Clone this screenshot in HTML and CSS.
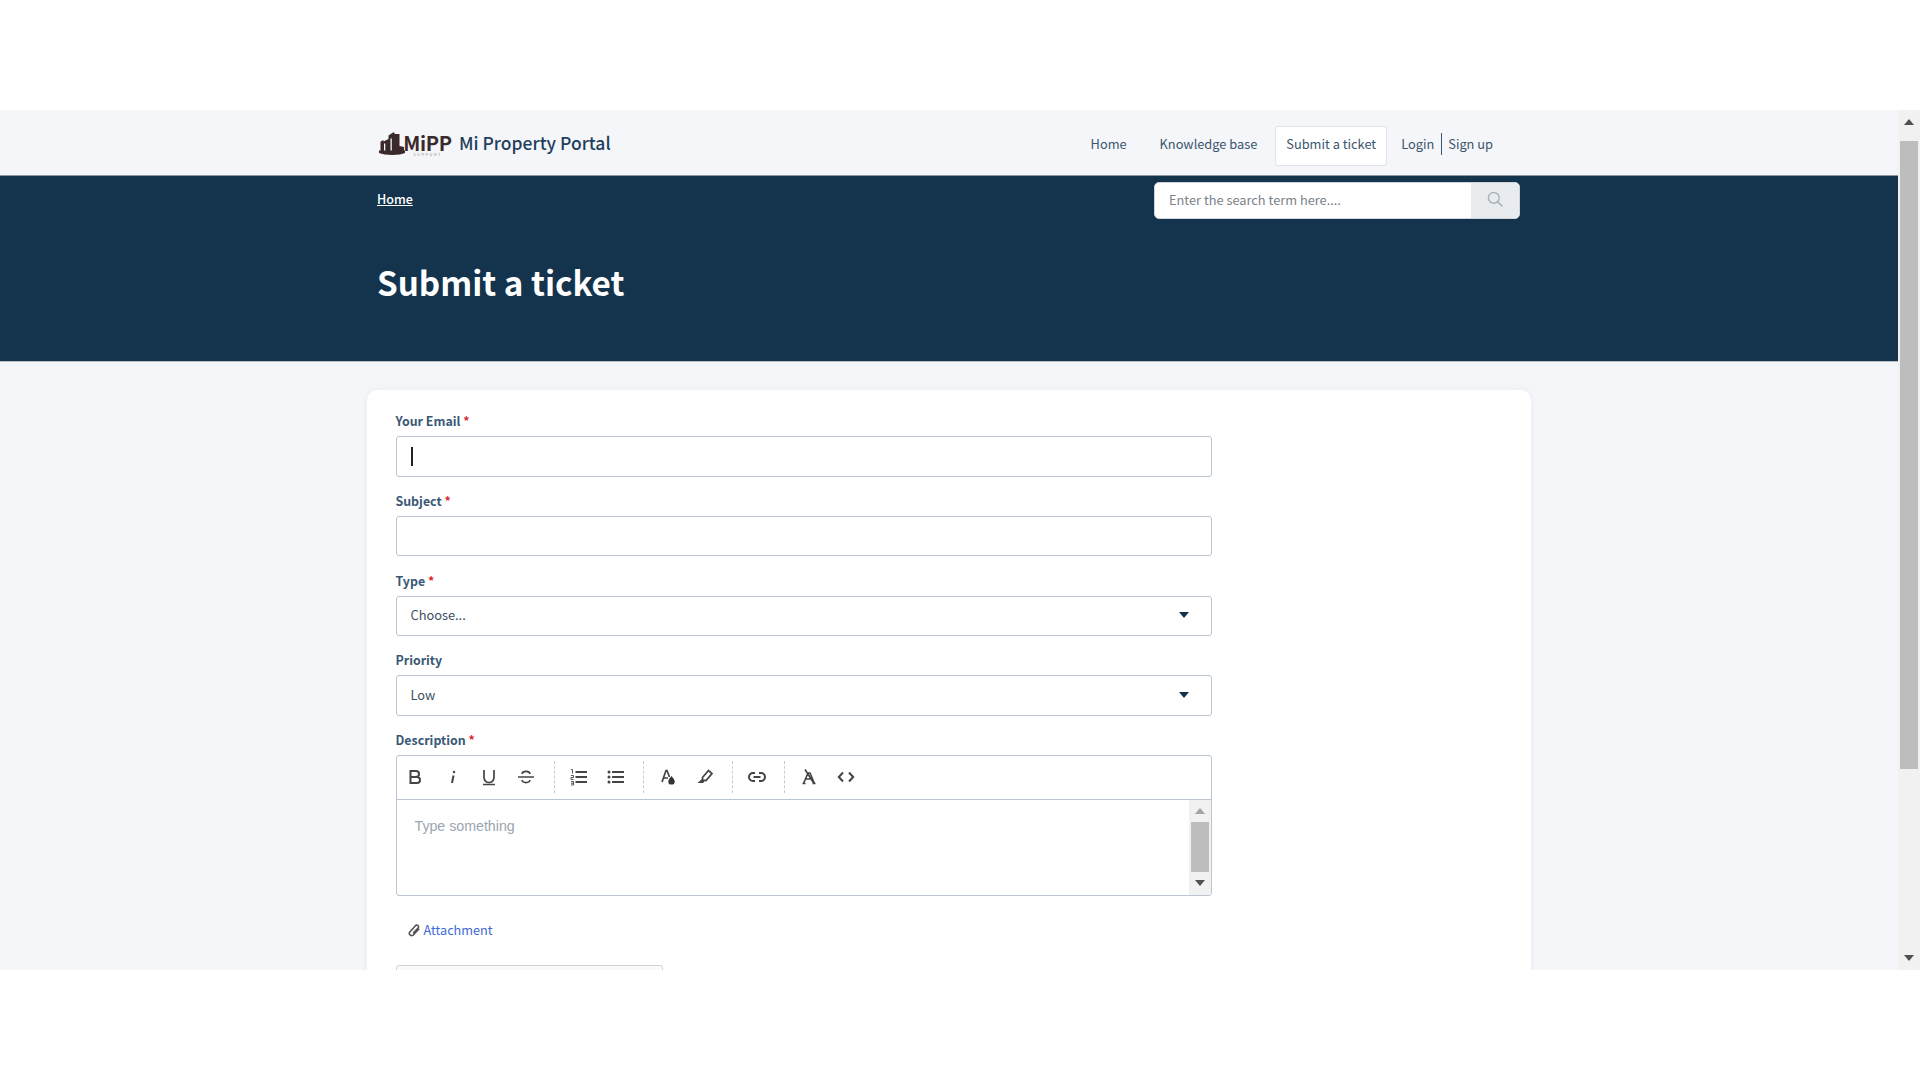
FILE: index.html
```html
<!DOCTYPE html>
<html lang="en">
<head>
<meta charset="utf-8">
<title>Submit a ticket</title>
<link rel="stylesheet" href="styles.css">
</head>
<body>
<div class="app">
  <div class="page">
    <header class="topbar">
      <div class="container topbar-inner">
        <a class="brand">
          <span class="logo">
            <svg class="logo-mark" viewBox="0 0 26 24" width="26" height="24">
              <path fill="#3b2a2b" d="M0 18.500h26v2.500c-5 2.600-20 2.600-26 0z"/>
              <path fill="#3b2a2b" d="M1.500 9.500l3-1.500v1.500l5-2.500V3.500L14 .5h1.500V2h5v17H1.500zM20.500 14l4.500 1v4h-4.500z"/>
              <path fill="#f5f7fa" d="M5 11.500h1.300v7H5zM11.500 6.500h1.300v12h-1.300z"/>
            </svg>
            <span class="logo-text">
              <span class="logo-name">MiPP</span>
              <span class="logo-sub">SUPPORT</span>
            </span>
          </span>
          <span class="brand-name">Mi Property Portal</span>
        </a>
        <nav class="nav">
          <a class="nav-link">Home</a>
          <a class="nav-link nav-link-tight">Knowledge base</a>
          <a class="nav-link nav-active">Submit a ticket</a>
          <span class="auth"><a class="auth-link">Login</a><a class="auth-link auth-last">Sign up</a></span>
        </nav>
      </div>
    </header>
    <section class="hero">
      <div class="container">
        <div class="hero-top">
          <a class="crumb">Home</a>
          <div class="search">
            <span class="search-input">Enter the search term here....</span>
            <span class="search-btn">
              <svg viewBox="0 0 16 16" width="16" height="16"><circle cx="6.800" cy="6.800" r="5.400" fill="none" stroke="#a9b4bd" stroke-width="1.500"/><path d="M10.800 10.800l4.200 4.200" stroke="#a9b4bd" stroke-width="1.700" stroke-linecap="round"/></svg>
            </span>
          </div>
        </div>
        <h1 class="title">Submit a ticket</h1>
      </div>
    </section>
    <main class="container card-wrap">
      <div class="card">
        <form class="form">
          <div class="field">
            <label class="label">Your Email <em class="req">*</em></label>
            <div class="control"><span class="caret"></span></div>
          </div>
          <div class="field">
            <label class="label">Subject <em class="req">*</em></label>
            <div class="control"></div>
          </div>
          <div class="field">
            <label class="label">Type <em class="req">*</em></label>
            <div class="control select"><span>Choose...</span><i class="tri"></i></div>
          </div>
          <div class="field">
            <label class="label">Priority</label>
            <div class="control select"><span>Low</span><i class="tri"></i></div>
          </div>
          <div class="field">
            <label class="label">Description <em class="req">*</em></label>
            <div class="editor">
              <div class="toolbar">
                <div class="tgroup">
                  <span class="tbtn"><svg viewBox="0 0 18 18"><path fill="none" stroke="#444" stroke-width="2" d="M4.500 3h5.500a3 3 0 0 1 0 6H4.500zM4.500 9h6.500a3 3 0 0 1 0 6H4.500z"/></svg></span>
                  <span class="tbtn"><svg viewBox="0 0 18 18"><path fill="none" stroke="#444" stroke-width="2" d="M10.500 7.500L9 15"/><circle cx="11" cy="4" r="1.200" fill="#444"/></svg></span>
                  <span class="tbtn"><svg viewBox="0 0 18 18"><path fill="none" stroke="#444" stroke-width="1.700" d="M4 2v7.500a5 5 0 0 0 10 0V2M3 16.500h12"/></svg></span>
                  <span class="tbtn"><svg viewBox="0 0 18 18"><path fill="none" stroke="#444" stroke-width="1.600" d="M1 9h16M13 6c-.5-3.500-7.500-3.500-8 0M5 12c.5 3.500 7.500 3.500 8 0"/></svg></span>
                </div>
                <div class="tgroup">
                  <span class="tbtn"><svg viewBox="0 0 18 18"><path stroke="#444" stroke-width="1.900" d="M5.500 4H17M5.500 9H17M5.500 14H17"/><path fill="none" stroke="#444" stroke-width=".9" d="M1 1.500h1.500v4M1 7.500h2.500v2H1v2h2.500M1 13.500h2.500v3.500H1M1 15.200h2.500"/></svg></span>
                  <span class="tbtn"><svg viewBox="0 0 18 18"><path stroke="#444" stroke-width="1.900" d="M5 4H17M5 9H17M5 14H17"/><circle cx="2" cy="4" r="1.500" fill="#444"/><circle cx="2" cy="9" r="1.500" fill="#444"/><circle cx="2" cy="14" r="1.500" fill="#444"/></svg></span>
                </div>
                <div class="tgroup">
                  <span class="tbtn"><svg viewBox="0 0 18 18"><path fill="none" stroke="#444" stroke-width="1.700" d="M3 14L7 2.500h1L10.500 9M4.500 10h4.500"/><path fill="#333" d="M12.500 8c1.100 1.600 3.200 3.300 3.200 5.400a3.200 3.200 0 0 1-6.400 0c0-2.100 2.100-3.800 3.200-5.400z"/></svg></span>
                  <span class="tbtn"><svg viewBox="0 0 18 18"><path fill="none" stroke="#444" stroke-width="1.700" d="M6.500 9.500L12.500 2.500l3.500 3-6 7-3.500-.5z"/><path fill="#444" d="M6 11l2.500 2.500-1.500 1.500H1.500z"/></svg></span>
                </div>
                <div class="tgroup">
                  <span class="tbtn"><svg viewBox="0 0 18 18"><path fill="none" stroke="#444" stroke-width="2" d="M7 5H5a4 4 0 0 0 0 8h2M11 5h2a4 4 0 0 1 0 8h-2M5.500 9h7"/></svg></span>
                </div>
                <div class="tgroup tgroup-last">
                  <span class="tbtn"><svg viewBox="0 0 18 18"><path fill="none" stroke="#444" stroke-width="1.600" d="M3.500 15.500L8 5h2l4.500 10.500M2.500 15.500h3M12.500 15.500h3M6 11h6M5 1.500l9 14"/></svg></span>
                  <span class="tbtn"><svg viewBox="0 0 18 18"><path fill="none" stroke="#444" stroke-width="2" d="M6 4.500L1.800 9 6 13.500M12 4.500L16.200 9 12 13.500"/></svg></span>
                </div>
              </div>
              <div class="editor-body">
                <div class="editor-text">Type something</div>
                <div class="bar bar-small">
                  <i class="arrow arrow-up arrow-dim"></i>
                  <i class="thumb thumb-small"></i>
                  <i class="arrow arrow-down"></i>
                </div>
              </div>
            </div>
          </div>
          <a class="attach">
            <svg viewBox="0 0 14 14" width="13" height="13"><path fill="none" stroke="#555" stroke-width="1.700" d="M12 5L6 11.500a2.500 2.500 0 0 1-4-3L8 2a1.800 1.800 0 0 1 3 2L5.500 10"/></svg>
            Attachment
          </a>
        </form>
        <div class="captcha"></div>
      </div>
    </main>
  </div>
  <div class="bar bar-page">
    <i class="arrow arrow-up"></i>
    <i class="thumb thumb-page"></i>
    <i class="arrow arrow-down"></i>
  </div>
</div>
</body>
</html>
```
FILE: styles.css
```css
* { box-sizing: border-box; }
html, body { margin: 0; padding: 0; height: 100%; overflow: hidden; background: #fff; }
body {
  padding: 110px 0;
  font-family: "Noto Sans CJK JP", "Noto Sans", sans-serif;
  font-size: 13px;
  line-height: 20px;
  color: #1f3f5b;
}
.app { display: flex; height: 860px; overflow: hidden; background: #f5f6f9; }
.page { flex: 1; min-width: 0; overflow: hidden; }
.container { width: 1164px; margin: 0 auto; }

.topbar { height: 66px; background: #f5f6f9; border-bottom: 1px solid #8a97a3; }
.topbar-inner { display: flex; align-items: center; justify-content: space-between; height: 65px; padding: 0 38px 0 10px; }
.brand { display: flex; align-items: center; gap: 8px; padding-top: 1px; }
.logo { display: flex; align-items: flex-end; width: 74px; padding-left: 2px; }
.logo-mark { flex: none; margin-right: -1px; }
.logo-text { display: flex; flex-direction: column; align-items: center; width: 47px; padding-top: 2px; color: #3b2a2b; }
.logo-name { font-size: 20px; font-weight: 700; line-height: 19px; letter-spacing: -.3px; }
.logo-sub { font-size: 4px; line-height: 4px; letter-spacing: 1.500px; color: #9a9090; }
.brand-name { font-size: 17.500px; font-weight: 500; line-height: 24px; color: #1f3f5b; }
.nav { display: flex; align-items: center; padding-top: 6px; color: #3a556d; font-size: 12.800px; }
.nav-link { display: block; padding: 0 11px; margin-right: 9px; line-height: 34px; height: 40px; border: 1px solid transparent; border-radius: 3px; }
.nav-link-tight { margin-right: 6px; }
.nav-active { padding: 0 10px; background: #fff; border-color: #dfe3e8; margin-right: 4px; }
.auth { display: flex; align-items: center; margin-top: -4px; }
.auth-link { display: block; padding: 0 7px 0 10px; line-height: 22px; }
.auth-last { border-left: 1px solid #3a556d; padding: 0 0 0 6px; }

.hero { height: 186px; background: #14344e; border-bottom: 1px solid #b9c0c6; }
.hero .container { padding: 6px 11px 0 10px; }
.hero-top { display: flex; justify-content: space-between; align-items: flex-start; }
.crumb { margin-top: 7px; color: #fff; font-weight: 500; font-size: 12.500px; text-decoration: underline; line-height: 20px; }
.search { display: flex; width: 366px; height: 37px; background: #fff; border-radius: 5px; overflow: hidden; border: 1px solid #ced4da; }
.search-input { flex: 1; padding-left: 14px; line-height: 34px; color: #7a8288; font-size: 12.800px; }
.search-btn { display: flex; align-items: center; justify-content: center; width: 48px; background: #e9ecef; padding-bottom: 3px; }
.title { margin: 39px 0 0; color: #fff; font-size: 33.200px; font-weight: 700; line-height: 48px; }

.card-wrap { padding-top: 28px; }
.card { background: #fff; border-radius: 10px; height: 900px; padding: 21px 28.500px; box-shadow: 0 0 6px rgba(30, 50, 70, .07); }
.form { width: 816px; }
.field { margin-bottom: 14.250px; }
.label { display: block; height: 20px; margin-bottom: 5px; font-size: 12.400px; font-weight: 600; line-height: 20px; color: #3a5875; }
.req { font-style: normal; color: #d9232e; }
.control { display: flex; align-items: center; height: 40.500px; padding: 0 14px; background: #fff; border: 1px solid #bcc6d2; border-radius: 3px; font-size: 12.800px; color: #3a4f62; }
.caret { width: 2px; height: 19px; background: #222; }
.select { justify-content: space-between; padding-bottom: 1px; }
.tri { width: 0; height: 0; margin-right: 8px; border-left: 5.500px solid transparent; border-right: 5.500px solid transparent; border-top: 6px solid #14344e; }

.editor { height: 141px; border: 1px solid #bcc6d2; border-radius: 3px; overflow: hidden; }
.toolbar { display: flex; align-items: center; height: 44px; padding-bottom: 2px; border-bottom: 1px solid #bcc6d2; }
.tgroup { display: flex; align-items: center; height: 32px; padding-right: 9px; margin-right: 5px; border-right: 1px dashed #c5ccd4; }
.tgroup + .tgroup { padding-left: 1px; padding-right: 8px; }
.tgroup-last { border-right: 0; }
.tbtn { display: flex; align-items: center; justify-content: center; width: 37px; height: 32px; }
.tbtn svg { width: 18px; height: 18px; }
.editor-body { display: flex; height: 96px; }
.editor-text { flex: 1; padding: 17px 18px; font-family: "Liberation Sans", sans-serif; font-size: 14.200px; line-height: 18px; color: #9aa5b1; }

.bar { display: flex; flex-direction: column; align-items: center; background: #f1f1f1; }
.bar-small { width: 22px; padding: 8px 2px 10px; justify-content: space-between; }
.bar-page { flex: none; width: 22px; padding: 9px 2px 9px; justify-content: space-between; }
.thumb { display: block; width: 18px; background: #bdbdbd; }
.thumb-small { height: 50px; }
.thumb-page { height: 628px; margin-bottom: auto; margin-top: 16px; }
.arrow { width: 0; height: 0; border-left: 5px solid transparent; border-right: 5px solid transparent; }
.arrow-up { border-bottom: 6px solid #505050; }
.arrow-down { border-top: 6px solid #505050; }
.arrow-dim { border-bottom-color: #a3a3a3; }

.attach { display: flex; align-items: center; gap: 3px; margin: 24px 0 0 12px; font-size: 12.700px; line-height: 20px; color: #3f6ad8; }
.captcha { width: 267px; height: 70px; margin-top: 25px; border: 1px solid #d3d3d3; border-radius: 3px; background: #fafafa; }
```
